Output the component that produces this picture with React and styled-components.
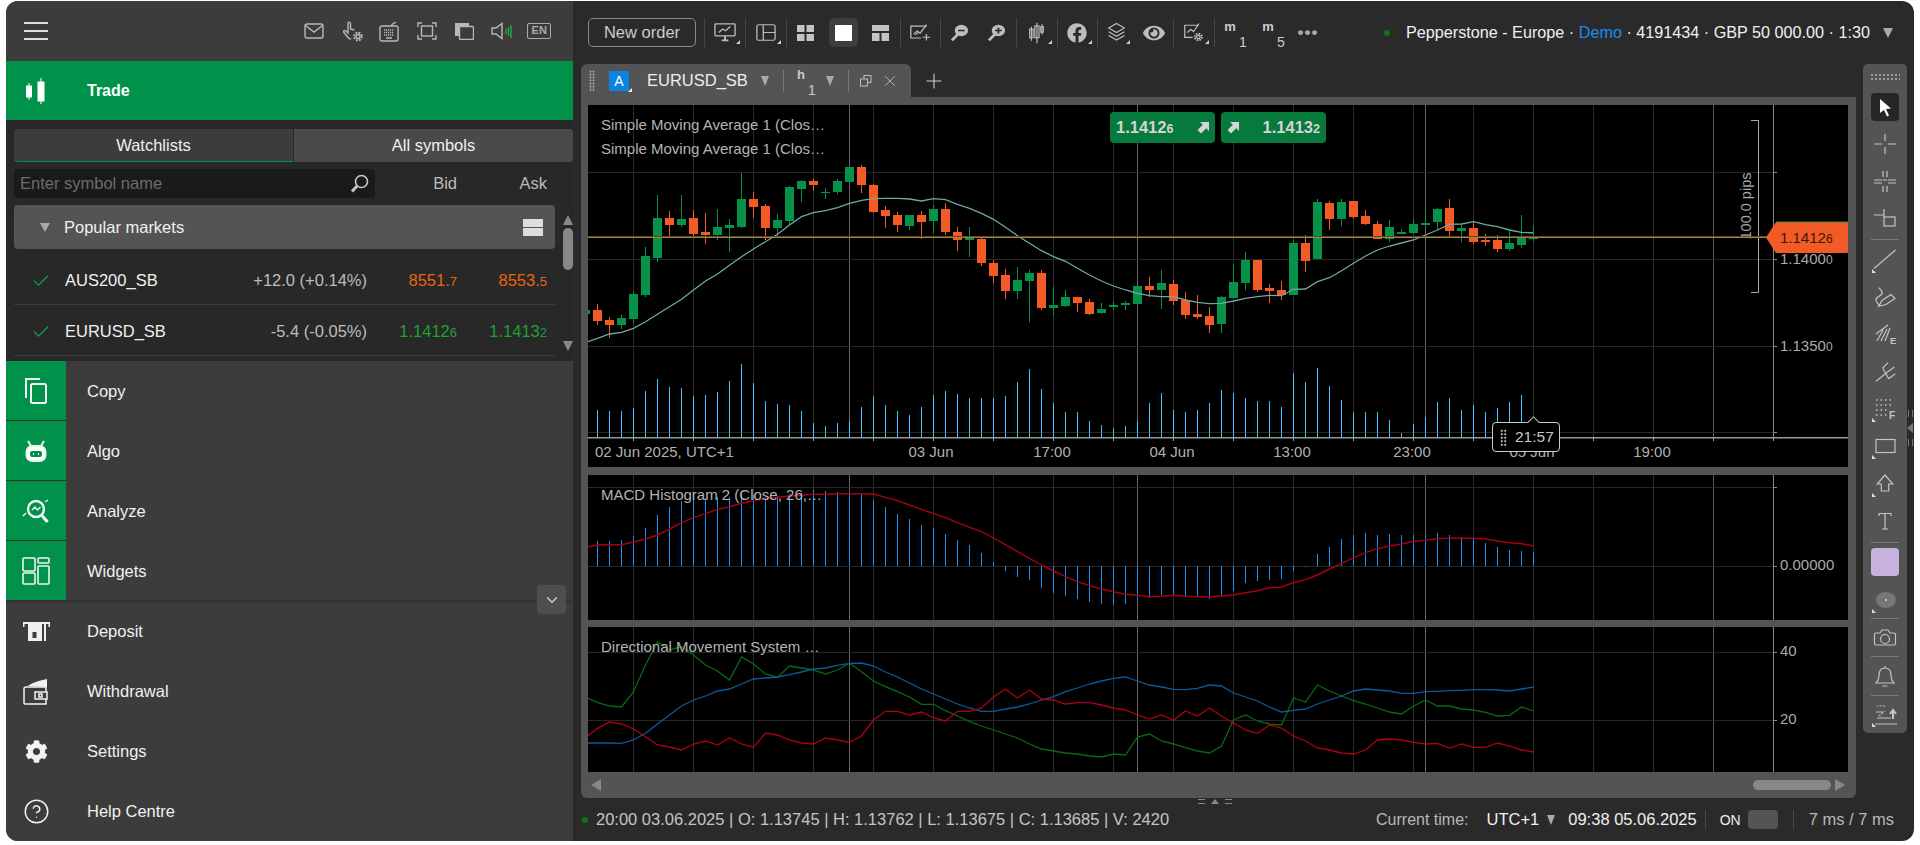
import React from 'react';
import styled, { createGlobalStyle } from 'styled-components';
import { Check, CircleHelp, ChevronDown, Plus, X } from 'lucide-react';
import { FaCog, FaEye, FaFacebook } from 'react-icons/fa';

const GREEN = '#00924a';
const FONT = '"Liberation Sans", Arial, sans-serif';

const Global = createGlobalStyle`
    html, body {
        margin: 0;
        background: #fff;
        overflow: hidden;
    }
    body {
        font-family: ${FONT};
        font-size: 16px;
        color: #ddd;
    }
    * { box-sizing: border-box; }
`;

const Shell = styled.div`
    display: flex;
    width: 1908px;
    height: 840px;
    margin: 1px 6px 4px;
    border-radius: 12px;
    overflow: hidden;
    background: #2a2a2a;
`;

/* ---------- left panel ---------- */
const Sidebar = styled.aside`
    display: flex;
    flex-direction: column;
    width: 567px;
    background: #3c3c3c;
    font-size: 16.5px;
    flex: none;
`;

const SideHeader = styled.header`
    display: flex;
    align-items: center;
    height: 60px;
    padding-left: 18px;
    flex: none;
`;

const HeaderIcons = styled.div`
    display: flex;
    align-items: center;
    margin-left: auto;
    margin-right: 15px;
    color: #b8b8b8;
`;

const HeaderSlot = styled.span`
    display: flex;
    align-items: center;
    justify-content: center;
    width: 37.5px;
`;

const LangBadge = styled.span`
    width: 24px;
    height: 16px;
    border: 1.5px solid #aaa;
    border-radius: 2px;
    font-size: 11px;
    font-weight: bold;
    line-height: 13px;
    text-align: center;
    color: #aaa;
`;

const TradeRow = styled.div`
    display: flex;
    align-items: center;
    height: 59px;
    background: ${GREEN};
    color: #fff;
    font-weight: bold;
    font-size: 16px;
    flex: none;
`;

const IconSlot = styled.div`
    display: flex;
    align-items: center;
    justify-content: center;
    width: 60px;
    height: 100%;
    margin-right: 21px;
    flex: none;
    color: #f2f2f2;
    background: ${p => (p.$green ? GREEN : 'transparent')};
    border-bottom: ${p => (p.$green ? '1px solid #2f2f2f' : 'none')};
`;

const WatchSection = styled.section`
    position: relative;
    height: 241px;
    padding: 9px 0 0 8px;
    background: #282828;
    flex: none;
`;

const Tabs = styled.div`
    display: flex;
    height: 33px;
    gap: 1px;
`;

const TabItem = styled.div`
    flex: 1;
    display: flex;
    align-items: center;
    justify-content: center;
    color: #f0f0f0;
    background: ${p => (p.$active ? '#3c3c3c' : '#4a4a4a')};
    border-bottom: ${p => (p.$active ? `1px solid ${GREEN}` : 'none')};
    border-radius: ${p => (p.$active ? '4px 0 0 4px' : '0 4px 4px 0')};
`;

const SearchRow = styled.div`
    display: grid;
    grid-template-columns: 361px 82px 90px;
    align-items: center;
    height: 29px;
    margin-top: 7px;
    color: #bbb;
`;

const SearchBox = styled.div`
    display: flex;
    align-items: center;
    justify-content: space-between;
    height: 29px;
    padding: 0 6px;
    background: #1a1a1a;
    border-radius: 4px;
    color: #6c6c6c;
    svg { color: #c8c8c8; }
`;

const RightCell = styled.span`
    text-align: right;
`;

const GroupHeader = styled.div`
    display: flex;
    align-items: center;
    width: 541px;
    height: 44px;
    margin: 7px 0 5px;
    padding-left: 26px;
    background: #545454;
    border-radius: 4px;
    color: #f0f0f0;
`;

const CaretDown = styled.span`
    width: 0;
    height: 0;
    margin-right: ${p => p.$mr || 0}px;
    margin-left: ${p => p.$ml || 0}px;
    border-left: ${p => p.$w || 5}px solid transparent;
    border-right: ${p => p.$w || 5}px solid transparent;
    border-top: ${p => p.$h || 9}px solid ${p => p.$color || '#aaa'};
    flex: none;
`;

const Stack = styled.span`
    display: flex;
    flex-direction: column;
    gap: 1px;
    width: 20px;
    margin-left: auto;
    margin-right: 12px;
    i {
        display: block;
        height: 8px;
        background: #ddd;
    }
`;

const WatchRow = styled.div`
    display: grid;
    grid-template-columns: 34px 1fr 120px 90px 90px;
    align-items: center;
    width: 541px;
    height: 51px;
    padding: 3px 8px 0 17px;
    border-bottom: 1px solid #3c3c3c;
    color: #f0f0f0;
`;

const Change = styled.span`
    text-align: right;
    color: #bdbdbd;
    white-space: nowrap;
`;

const Quote = styled.span`
    text-align: right;
    color: ${p => p.$color};
    small { font-size: 13px; }
`;

const ScrollRail = styled.div`
    position: absolute;
    right: 0;
    top: 95px;
    display: flex;
    flex-direction: column;
    align-items: center;
    width: 10px;
`;

const RailThumb = styled.div`
    width: 10px;
    height: 42px;
    margin-top: 3px;
    background: #888;
    border-radius: 5px;
`;

const ArrowUp = styled.span`
    width: 0;
    height: 0;
    margin-top: ${p => p.$mt || 0}px;
    border-left: 5px solid transparent;
    border-right: 5px solid transparent;
    border-bottom: 10px solid #888;
`;

const ArrowDown = styled(ArrowUp)`
    border-bottom: 0;
    border-top: 10px solid #888;
`;

const NavList = styled.nav`
    position: relative;
    display: flex;
    flex-direction: column;
    flex: 1;
`;

const NavRow = styled.div`
    display: flex;
    align-items: center;
    height: 60px;
    color: #f0f0f0;
    flex: none;
`;

const NavDivider = styled.div`
    height: 3px;
    margin: -1px 0 -2px;
    background: #333;
    flex: none;
`;

const CollapseBtn = styled.button`
    position: absolute;
    left: 531px;
    top: 224px;
    display: flex;
    align-items: center;
    justify-content: center;
    width: 29px;
    height: 29px;
    padding: 0;
    border: 0;
    border-radius: 4px;
    background: #4e4e4e;
    color: #ccc;
`;

/* ---------- main column ---------- */
const Main = styled.main`
    display: flex;
    flex-direction: column;
    flex: 1;
    min-width: 0;
`;

const Toolbar = styled.div`
    display: flex;
    align-items: center;
    height: 63px;
    padding: 0 21px 0 15px;
    color: #bdbdbd;
    flex: none;
`;

const NewOrder = styled.button`
    width: 108px;
    height: 29px;
    margin-right: 8px;
    padding: 0;
    border: 1px solid #8a8a8a;
    border-radius: 5px;
    background: transparent;
    color: #ccc;
    font: 16.5px ${FONT};
    flex: none;
`;

const Sep = styled.span`
    width: 1px;
    height: 29px;
    background: #454545;
    flex: none;
`;

const ToolBtn = styled.span`
    position: relative;
    display: flex;
    align-items: center;
    justify-content: center;
    width: ${p => p.$w || 37.5}px;
    height: 29px;
    flex: none;
    ${p => p.$caret && `
        &::after {
            content: '';
            position: absolute;
            right: 5px;
            bottom: 3px;
            border-left: 4px solid transparent;
            border-bottom: 4px solid #ccc;
        }
    `}
    ${p => p.$active && `
        &::before {
            content: '';
            position: absolute;
            left: 4px;
            right: 4px;
            top: 0;
            bottom: 0;
            background: #3d3d3d;
            border-radius: 5px;
        }
        svg { position: relative; }
    `}
`;

const Period = styled.span`
    display: inline-flex;
    gap: 3px;
    width: ${p => (p.$wide ? '22px' : 'auto')};
    height: 26px;
    margin-left: ${p => p.$ml || 0}px;
    font-size: 14px;
    color: #ccc;
    b {
        font-size: 13px;
        line-height: 14px;
        align-self: flex-start;
    }
    em {
        font-style: normal;
        line-height: 16px;
        align-self: flex-end;
        margin-bottom: -4px;
    }
`;

const Dots = styled.span`
    font-size: 17px;
    font-weight: bold;
    letter-spacing: 1px;
    color: #aaa;
    line-height: 10px;
`;

const Account = styled.div`
    display: flex;
    align-items: center;
    margin-left: auto;
    font-size: 16.2px;
    color: #f0f0f0;
    white-space: nowrap;
    em {
        font-style: normal;
        color: #1a8cf0;
    }
`;

const GreenDot = styled.span`
    width: 6px;
    height: 6px;
    margin-right: ${p => p.$mr}px;
    border-radius: 50%;
    background: #0b7a0b;
    flex: none;
`;

const Work = styled.div`
    position: relative;
    display: flex;
    padding-left: 8px;
    gap: 7px;
    flex: none;
`;

const ChartColumn = styled.div`
    display: flex;
    flex-direction: column;
    width: 1275px;
`;

const TabBar = styled.div`
    display: flex;
    align-items: center;
    height: 33px;
`;

const ChartTab = styled.div`
    display: flex;
    align-items: center;
    width: 330px;
    height: 33px;
    padding-left: 8px;
    background: #545454;
    border-radius: 6px 6px 0 0;
    color: #eee;
`;

const Grip = styled.span`
    width: 6px;
    height: 22px;
    margin-right: 14px;
    background-image: radial-gradient(circle, #888 1px, transparent 1.2px);
    background-size: 3px 3px;
    flex: none;
`;

const SymbolBadge = styled.span`
    position: relative;
    width: 20px;
    height: 20px;
    margin-right: 18px;
    background: #0a84e0;
    color: #fff;
    font-size: 14px;
    line-height: 20px;
    text-align: center;
    flex: none;
    &::after {
        content: '';
        position: absolute;
        right: -3px;
        bottom: -1px;
        border-left: 4px solid transparent;
        border-bottom: 4px solid #eee;
    }
`;

const SymbolName = styled.span`
    width: 100px;
    font-size: 16.5px;
    flex: none;
`;

const TabSep = styled.span`
    width: 1px;
    height: 22px;
    margin: 0 ${p => p.$r || 0}px 0 ${p => p.$l || 0}px;
    background: #777;
    flex: none;
`;

const RestoreIcon = styled.svg`
    width: 12px;
    height: 12px;
    fill: none;
    stroke: #bbb;
    flex: none;
`;

const CloseIcon = styled(X)`
    margin-left: 9px;
    color: #c4c4c4;
`;

const AddTab = styled.span`
    display: flex;
    margin-left: 11px;
    color: #d0d0d0;
`;

const Pane = styled.div`
    display: flex;
    flex-direction: column;
    height: 701px;
    padding: 8px 8px 0 7px;
    background: #545454;
    border-radius: 0 0 6px 6px;
`;

const ChartBox = styled.div`
    position: relative;
    height: ${p => p.$h}px;
    margin-bottom: ${p => p.$mb}px;
    background: #000;
    overflow: hidden;
    flex: none;
`;

const ChartSvg = styled.svg`
    display: block;
    font-family: ${FONT};
    font-size: 15px;
`;

const Legend = styled.div`
    position: absolute;
    left: 13px;
    top: ${p => p.$top}px;
    font-size: 15px;
    line-height: 24px;
    color: #b4b4b4;
    white-space: nowrap;
`;

const QuoteButtons = styled.div`
    position: absolute;
    left: 522px;
    top: 7px;
    display: flex;
    gap: 6px;
`;

const QuoteBtn = styled.div`
    display: flex;
    align-items: center;
    justify-content: space-between;
    flex-direction: ${p => (p.$reverse ? 'row-reverse' : 'row')};
    width: 105px;
    height: 31px;
    padding: 0 6px;
    background: #067a3c;
    border-radius: 4px;
    color: #d4d4d4;
    font-size: 16.5px;
    font-weight: bold;
    small { font-size: 12.5px; }
`;

const TimeTip = styled.div`
    position: absolute;
    left: 904px;
    top: 317px;
    display: flex;
    align-items: center;
    width: 68px;
    height: 30px;
    padding-left: 7px;
    gap: 8px;
    background: #000;
    border: 1px solid #ccc;
    border-radius: 4px;
    font-size: 15.5px;
    color: #c8c8c8;
    &::before {
        content: '';
        position: absolute;
        left: 36px;
        top: -5px;
        width: 8px;
        height: 8px;
        background: #000;
        border-left: 1px solid #ccc;
        border-top: 1px solid #ccc;
        transform: rotate(45deg);
    }
`;

const TipGrip = styled.span`
    width: 7px;
    height: 17px;
    background-image: radial-gradient(circle, #ccc 1.2px, transparent 1.4px);
    background-size: 3.5px 3.5px;
`;

const HScroll = styled.div`
    display: flex;
    align-items: center;
    height: 26px;
    padding: 0 3px;
`;

const ArrowSide = styled.span`
    width: 0;
    height: 0;
    border-top: 6px solid transparent;
    border-bottom: 6px solid transparent;
    ${p => (p.$right ? 'border-left: 10px solid #888;' : 'border-right: 10px solid #888;')}
    flex: none;
`;

const HThumb = styled.span`
    width: 78px;
    height: 10px;
    margin: 0 4px 0 auto;
    background: #888;
    border-radius: 5px;
`;

const Status = styled.footer`
    position: relative;
    display: flex;
    align-items: center;
    height: 43px;
    padding-left: 9px;
    font-size: 16.5px;
    color: #c4c4c4;
    white-space: nowrap;
    flex: none;
`;

const SplitHandle = styled.span`
    position: absolute;
    left: 625px;
    top: 1px;
    display: flex;
    align-items: center;
    gap: 6px;
    i {
        display: block;
        width: 7px;
        height: 5px;
        border-top: 1px solid #888;
        border-bottom: 1px solid #888;
    }
    u {
        display: block;
        border-left: 4px solid transparent;
        border-right: 4px solid transparent;
        border-bottom: 5px solid #888;
    }
`;

const StatusRight = styled.div`
    display: flex;
    align-items: center;
    margin-left: auto;
    margin-right: 20px;
`;

const Muted = styled.span`
    color: #b8b8b8;
    font-size: ${p => p.$fs || 16.5}px;
    margin-right: ${p => p.$mr || 0}px;
`;

const Bright = styled.span`
    color: #f0f0f0;
    margin-right: ${p => p.$mr || 0}px;
`;

const OnLabel = styled.span`
    font-size: 14px;
    color: #eee;
    margin: 0 7px 0 14px;
`;

const Toggle = styled.span`
    width: 30px;
    height: 19px;
    margin-right: 15px;
    background: #545454;
    border-radius: 4px;
`;

const StatusSep = styled.span`
    width: 1px;
    height: 19px;
    background: #4a4a4a;
    margin-right: ${p => p.$mr || 0}px;
    margin-left: ${p => p.$ml || 0}px;
`;

/* ---------- drawing tools ---------- */
const Tools = styled.div`
    display: flex;
    flex-direction: column;
    align-items: center;
    width: 44px;
    height: 669px;
    background: #545454;
    border-radius: 5px;
    color: #c4c4c4;
    flex: none;
`;

const ToolsGrip = styled.span`
    width: 30px;
    height: 8px;
    margin: 9px 0 7px;
    background-image: radial-gradient(circle, #a0a0a0 1.1px, transparent 1.3px);
    background-size: 4px 4px;
    flex: none;
`;

const ToolItem = styled.span`
    display: flex;
    align-items: center;
    justify-content: center;
    width: 28px;
    height: 37.3px;
    flex: none;
    ${p => p.$active && `
        position: relative;
        &::before {
            content: '';
            position: absolute;
            left: 0;
            right: 0;
            top: 5px;
            bottom: 4px;
            background: #262626;
            border-radius: 4px;
        }
        svg { position: relative; }
    `}
`;

const Swatch = styled.span`
    width: 28px;
    height: 28px;
    background: #c8b3df;
    border-radius: 4px;
`;

const ToolSep = styled.span`
    width: 28px;
    height: 1px;
    margin: ${p => (p.$loose ? '2px 0 1px' : '0')};
    background: #7a7a7a;
    flex: none;
`;

const EdgeHandle = styled.span`
    position: absolute;
    right: 1px;
    top: 346px;
    display: flex;
    flex-direction: column;
    align-items: center;
    gap: 6px;
    i {
        display: block;
        width: 5px;
        height: 7px;
        border-left: 1px solid #777;
        border-right: 1px solid #777;
    }
    u {
        display: block;
        border-top: 5px solid transparent;
        border-bottom: 5px solid transparent;
        border-right: 6px solid #777;
    }
`;

/* ---------- icons ---------- */
const Ico = ({ s = 24, h, rw, rh, children, sw = 1.4 }) => (
    <svg width={rw || s} height={rh || h || s} viewBox={`0 0 ${s} ${h || s}`} preserveAspectRatio="none" fill="none" stroke="currentColor" strokeWidth={sw}>
        {children}
    </svg>
);

const Hamburger = () => (
    <Ico s={24} h={20} sw={2}><path d="M0 2h24M0 10h24M0 18h24" /></Ico>
);
const Mail = () => (
    <Ico s={20} h={16}><rect x="1" y="1" width="18" height="14" rx="2" /><path d="M1.500 2.500 10 9l8.500-6.500" /></Ico>
);
const HandGear = () => (
    <Ico s={22} h={23}>
        <path d="M7 2.500c1-.9 2.500 0 2.500 1V9l4 1.200" />
        <path d="M7 2.500V13L4.600 10.800c-1.200-1-2.600.4-1.800 1.500L7 17.500c1 1.200 2 1.500 3 1.500" />
        <circle cx="17" cy="16.500" r="2" />
        <circle cx="17" cy="16.500" r="3.800" strokeDasharray="1.800 1.200" strokeWidth="2" />
    </Ico>
);
const Keyboard = () => (
    <Ico s={20} h={21}>
        <rect x="1" y="5" width="18" height="15" rx="2" />
        <path d="M5 9h10M5 11.500h10M5 14h10" strokeDasharray="1.200 .8" />
        <path d="M7 17h6M13 5V3.500L17 1" />
    </Ico>
);
const FrameIcon = () => (
    <Ico s={20} h={18}>
        <rect x="4.500" y="4" width="11" height="10" />
        <path d="M1 5V1h4M15 1h4v4M19 13v4h-4M5 17H1v-4" />
    </Ico>
);
const Windows = () => (
    <Ico s={20} h={18}>
        <path d="M1 14V1h14v3H5v10z" fill="currentColor" stroke="none" />
        <rect x="5.500" y="4.500" width="14" height="13" rx="1" />
    </Ico>
);
const Speaker = () => (
    <Ico s={22} h={18}>
        <path d="M1 6h4l6-4.500v15L5 12H1z" />
        <path d="M15 7v5M17.500 5v9M20 3v13" stroke="#2da24a" />
    </Ico>
);
const TradeIcon = () => (
    <svg width="22" height="28" viewBox="0 0 22 28" fill="#fff" stroke="#fff">
        <rect x="1.500" y="9" width="5" height="11" />
        <path d="M4 6v17" />
        <rect x="13" y="5" width="6" height="19" />
        <path d="M16 1v26" />
    </svg>
);
const CopyIcon = () => (
    <Ico s={22} h={26} sw={2}>
        <path d="M1 20V1h14" /><rect x="6" y="6" width="15" height="19" rx="1.500" />
    </Ico>
);
const AlgoIcon = () => (
    <Ico s={22} h={22} sw={2}>
        <path d="M3 1l3 5M19 1l-3 5" />
        <rect x="1.500" y="6" width="19" height="15" rx="6" fill="#fff" />
        <rect x="5" y="11" width="12" height="6" rx="2" fill={GREEN} stroke="none" />
        <path d="M8 14h1M13 14h1" stroke="#fff" />
    </Ico>
);
const AnalyzeIcon = () => (
    <Ico s={28} h={26} sw={2.400}>
        <circle cx="14" cy="11" r="8" />
        <path d="M19.500 17l6 7" strokeWidth="3.200" />
        <path d="M10 12l3-3 2.500 3 3-3" strokeWidth="1.400" />
        <path d="M1 18l3-3M23 4l3-2" strokeWidth="1.400" />
    </Ico>
);
const WidgetsIcon = () => (
    <Ico s={28} h={28} sw={1.600}>
        <rect x="1" y="1" width="12" height="13" rx="1" />
        <rect x="1" y="16" width="12" height="11" rx="1" />
        <rect x="16" y="1" width="11" height="5" rx="1" />
        <rect x="16" y="9" width="11" height="18" rx="1" />
    </Ico>
);
const DepositIcon = () => (
    <svg width="29" height="21" viewBox="0 0 29 21" fill="#f0f0f0">
        <path d="M1 1h27v5h-1.500V3h-24v3H1z" />
        <path d="M6 3h14v17H6z" />
        <rect x="22" y="3" width="2" height="17" />
        <rect x="10.500" y="11" width="4" height="6" fill="#3c3c3c" />
    </svg>
);
const WithdrawIcon = () => (
    <Ico s={26} h={27} sw={1.500}>
        <path d="M1 11v14a1 1 0 0 0 1 1h21v-5M1 11a2 2 0 0 1 2-2h20v5" />
        <rect x="12" y="14" width="12" height="7" />
        <rect x="16" y="16" width="3" height="3" />
        <path d="M5 8c3-3 10-5 19-7v8" fill="#f0f0f0" stroke="none" />
    </Ico>
);
const SearchIcon = () => (
    <Ico s={19} h={20} sw={1.600}>
        <circle cx="11.500" cy="7.500" r="6" />
        <path d="M7 12l-5 5.500" strokeWidth="3" />
    </Ico>
);

const MonitorIcon = () => (
    <Ico s={24} h={22} rw={23} rh={19}>
        <rect x="1" y="1" width="21" height="14" rx="1" />
        <path d="M5 11l4-4 3 2 5-5" /><path d="M8 20h7M11.500 15v5" strokeWidth="2" />
    </Ico>
);
const PanelsIcon = () => (
    <Ico s={22} h={22} rw={20} rh={17}>
        <rect x="1" y="1" width="20" height="20" rx="2" /><path d="M8 1v20M8 11h13" />
    </Ico>
);
const Grid4 = () => (
    <svg width="17" height="16" fill="#c4c4c4"><rect width="7.500" height="7" /><rect x="9.500" width="7.500" height="7" /><rect y="9" width="7.500" height="7" /><rect x="9.500" y="9" width="7.500" height="7" /></svg>
);
const Single = () => (
    <svg width="17" height="16" fill="#fff"><rect width="17" height="16" /></svg>
);
const Grid3 = () => (
    <svg width="17" height="16" fill="#c4c4c4"><rect width="17" height="6" /><rect y="8" width="7.500" height="8" /><rect x="9.500" y="8" width="7.500" height="8" /></svg>
);
const AddChart = () => (
    <Ico s={24} h={24} rw={22} rh={19}>
        <path d="M19 4H2v15h11" /><path d="M5 14l4-4 3 3 6-9 1-2M7 15l4-4" /><path d="M19 14v8M15 18h8" />
    </Ico>
);
const Zoom = ({ plus }) => (
    <Ico s={20} h={22} rw={19} rh={18} sw={2.400}>
        <circle cx="12" cy="8" r="7" fill="currentColor" stroke="none" />
        <path d="M8.500 8h7" stroke="#2a2a2a" strokeWidth="2" />
        {plus && <path d="M12 4.500v7" stroke="#2a2a2a" strokeWidth="2" />}
        <path d="M8 13l-6 7" strokeWidth="3" />
    </Ico>
);
const CandlesIcon = () => (
    <Ico s={20} h={28} rw={17} rh={22}>
        <rect x="2" y="9" width="4" height="11" /><path d="M4 6v18" />
        <rect x="8" y="5" width="5" height="15" /><path d="M10.500 1v26" />
        <rect x="15" y="6" width="3" height="7" /><path d="M16.500 3v13" />
    </Ico>
);
const LayersIcon = () => (
    <Ico s={24} h={28} rw={21} rh={21}>
        <path d="M12 2l9 6-9 6-9-6z" />
        <path d="M3 13l9 6 9-6M3 18l9 6 9-6" />
    </Ico>
);
const ChartGear = () => (
    <Ico s={24} h={26} rw={21} rh={21}>
        <path d="M18 4H2v15h9" /><path d="M5 13l4-4 3 3 5-8 1-2" />
        <circle cx="17.500" cy="18.500" r="2" /><circle cx="17.500" cy="18.500" r="4" strokeDasharray="1.800 1.300" strokeWidth="2.400" />
    </Ico>
);

const TC = () => <path d="M1 27v-4l4 4z" fill="#ddd" stroke="none" />;
const Tool = ({ children }) => (
    <svg width="28" height="28" viewBox="0 0 28 28" fill="none" stroke="currentColor" strokeWidth="1.200">{children}</svg>
);
const ToolIcons = {
    cursor: <Tool><path d="M9 6l11 9.500-5 .5 3 6.500-2 1-3-6.500-4 3z" fill="#fff" stroke="none" /></Tool>,
    cross: <Tool><path d="M3 14h8M17 14h8M14 4v7M14 17v7" /></Tool>,
    hair: <Tool><path d="M3 13h8M17 13h8M3 16h8M17 16h8M12 4v6M12 19v6M16 4v6M16 19v6" /><path d="M12 13h4" /></Tool>,
    ruler: <Tool><path d="M3 10h10M13 4v8" /><rect x="13" y="12" width="11" height="9" /></Tool>,
    line: <Tool><TC /><path d="M3 22.500L24.500 4" /></Tool>,
    pen: <Tool><path d="M7.700 4.700C10 7 12 8 11 10.700S4 14 5 17.300s3 4 2.700 5" /><path d="M7.700 23.300L11 17.500l9-6 4 4-9 6z" /></Tool>,
    fib: <Tool><path d="M5 14L17 5M6 21L12 10M10 21l6-12M14 21l5-13" /><text x="19" y="24" fontSize="9.500" fill="currentColor" stroke="none" fontWeight="bold">E</text></Tool>,
    fork: <Tool><path d="M5 23.300l9.300-7.600M11.700 10l6 10.700M11.700 10L17 4.700M14.300 15.700l9-6.700M17.700 20.700l6.600-5" /></Tool>,
    fibdots: <Tool><TC /><path d="M5 5h18M5 10h18M5 15h12M5 20h12" strokeDasharray="1.500 3" strokeWidth="1.500" /><text x="18" y="24" fontSize="10" fill="currentColor" stroke="none" fontWeight="bold">F</text></Tool>,
    rect: <Tool><TC /><rect x="5" y="7.500" width="19" height="13" /></Tool>,
    arrow: <Tool><TC /><path d="M14 5l-7.700 9h4v7h7.400v-7h4z" /></Tool>,
    text: <Tool><path d="M8 9V6.500h12V9M14 6.500V22M11 22h6" /></Tool>,
    ellipse: <Tool><TC /><ellipse cx="15" cy="14" rx="10" ry="8" fill="#777" stroke="none" /><circle cx="15" cy="14" r="1" fill="#ddd" stroke="none" /></Tool>,
    camera: <Tool><path d="M9 9l2-3h6l2 3h4c1 0 1.500.5 1.500 1.500v9c0 1-.5 1.500-1.500 1.500H5c-1 0-1.500-.5-1.500-1.500v-9C3.500 9.500 4 9 5 9z" /><circle cx="14" cy="15" r="4.500" /></Tool>,
    bell: <Tool><path d="M5 21c2-2 3-4 3-8s2-7 6-7 6 3 6 7 1 6 3 8zM11.500 24h5M14 4v2" /></Tool>,
    order: <Tool><TC /><path d="M4 24h22M6 18h14M5 12h7" /><path d="M8 16l6-5M14 6h-8" strokeDasharray="2 1.500" /><path d="M22 19v-8M19 14l3-4 3 4" strokeWidth="2" /></Tool>,
};

const MiniUp = () => (
    <svg width="12" height="12" viewBox="0 0 12 12" fill="#d4d4d4">
        <path d="M3 0h9v9l-2.800-2.800-5.200 5.200L.6 8l5.200-5.200z" />
    </svg>
);

/* ---------- data: body top, body bottom, wick top, wick bottom, colour (zoom units) ---------- */
const G = 'g';
const O = 'o';
const CANDLES = [
    [630, 642, 630, 642, G], [631, 663, 612, 676, O], [660, 676, 652, 715, O], [655, 675, 646, 688, G], [582, 657, 577, 668, G],
    [468, 585, 441, 591, G], [354, 474, 285, 486, G], [354, 375, 333, 409, O], [357, 375, 285, 380, G], [354, 402, 330, 409, O],
    [396, 405, 339, 433, O], [381, 405, 327, 420, G], [375, 384, 357, 457, G], [297, 381, 219, 384, G], [297, 321, 276, 354, O],
    [318, 384, 312, 420, O], [360, 384, 342, 408, G], [261, 363, 258, 375, G], [243, 267, 240, 306, G], [243, 255, 237, 273, O],
    [276, 279, 264, 297, G], [243, 276, 237, 282, G], [201, 246, 201, 250, G], [201, 255, 195, 279, O], [255, 336, 252, 339, O],
    [330, 348, 318, 384, O], [346, 375, 336, 396, O], [346, 378, 346, 390, G], [346, 366, 333, 417, O], [327, 363, 315, 400, G],
    [327, 396, 309, 405, O], [396, 420, 381, 453, O], [414, 420, 381, 471, G], [417, 489, 414, 498, O], [489, 528, 480, 549, O],
    [525, 573, 507, 597, O], [540, 573, 501, 597, G], [519, 543, 510, 666, G], [519, 624, 510, 630, O], [615, 624, 561, 648, G],
    [591, 618, 570, 621, G], [591, 609, 591, 636, O], [606, 642, 597, 645, O], [627, 639, 609, 642, G], [615, 621, 603, 630, G],
    [609, 615, 603, 630, G], [558, 612, 555, 612, G], [558, 570, 531, 591, O], [549, 570, 510, 627, G], [552, 603, 540, 615, O],
    [600, 645, 576, 657, O], [642, 651, 585, 657, O], [648, 675, 621, 699, O], [591, 672, 588, 699, G], [546, 594, 492, 597, G],
    [480, 549, 456, 570, G], [480, 570, 480, 576, O], [564, 573, 552, 609, O], [570, 585, 543, 600, O], [429, 585, 420, 585, G],
    [429, 483, 405, 516, O], [306, 477, 297, 477, G], [309, 357, 303, 390, O], [306, 357, 297, 378, G], [303, 351, 303, 357, O],
    [348, 372, 330, 375, O], [372, 417, 363, 417, O], [381, 417, 360, 426, G], [396, 402, 387, 402, G], [372, 399, 357, 402, G],
    [369, 375, 336, 378, G], [327, 366, 324, 390, G], [324, 393, 297, 408, O], [384, 393, 372, 426, G], [384, 426, 363, 432, O],
    [420, 426, 402, 438, O], [420, 447, 405, 456, O], [429, 447, 390, 453, G], [414, 435, 345, 444, G], [414, 418, 375, 423, G],
];
const SMA = [725, 715, 702, 697, 685, 665, 643, 620, 598, 570, 543, 522, 496, 470, 447, 425, 403, 375, 350, 338, 332, 323, 310, 301, 296, 295, 295, 297, 303, 296, 299, 313, 325, 340, 358, 382, 407, 430, 452, 470, 484, 505, 525, 543, 558, 570, 580, 587, 590, 590, 600, 607, 611, 610, 603, 595, 590, 586, 587, 568, 567, 545, 533, 512, 490, 468, 450, 438, 429, 420, 405, 390, 373, 372, 365, 374, 380, 390, 397, 399];
const VOLUME = [930, 933, 933, 924, 873, 837, 861, 864, 888, 885, 876, 843, 792, 849, 903, 912, 915, 933, 969, 978, 969, 963, 921, 888, 915, 933, 945, 921, 885, 873, 882, 894, 894, 894, 888, 846, 807, 867, 909, 936, 936, 963, 975, 984, 978, 963, 909, 879, 930, 936, 930, 909, 870, 879, 894, 903, 903, 921, 818, 846, 804, 858, 900, 936, 936, 936, 960, 999, 972, 951, 906, 894, 930, 915, 936, 924, 906, 885, 960];
const MACD_BARS = [213, 213, 210, 198, 175, 135, 111, 92, 88, 85, 80, 80, 72, 75, 78, 78, 72, 68, 60, 62, 65, 68, 72, 90, 111, 132, 147, 165, 175, 192, 210, 225, 249, 276, 303, 321, 330, 354, 369, 378, 387, 396, 402, 405, 402, 390, 384, 375, 375, 378, 380, 387, 378, 363, 339, 333, 330, 327, 303, 292, 252, 231, 207, 195, 189, 195, 192, 195, 195, 195, 189, 195, 201, 207, 219, 231, 240, 243, 246];
const MACD_LINE = [230, 225, 224, 224, 216, 207, 195, 177, 158, 143, 131, 118, 110, 100, 92, 85, 82, 78, 76, 73, 73, 71, 71, 71, 72, 82, 92, 105, 118, 130, 143, 158, 172, 185, 204, 224, 245, 265, 285, 303, 320, 335, 347, 357, 365, 373, 376, 380, 379, 376, 379, 380, 380, 378, 375, 368, 362, 353, 351, 338, 329, 315, 297, 280, 263, 248, 236, 228, 222, 214, 211, 206, 205, 205, 205, 207, 213, 218, 221, 228];
const DMS_GREEN = [685, 697, 708, 711, 665, 585, 516, 540, 530, 555, 585, 603, 630, 561, 582, 612, 622, 588, 594, 600, 612, 600, 580, 605, 633, 650, 665, 681, 703, 703, 722, 738, 754, 768, 780, 792, 804, 822, 837, 843, 849, 852, 858, 861, 852, 855, 801, 792, 813, 822, 833, 843, 849, 828, 750, 735, 753, 762, 765, 684, 696, 645, 663, 678, 692, 702, 714, 726, 732, 708, 690, 708, 708, 717, 720, 727, 738, 736, 711, 723];
const DMS_BLUE = [819, 819, 819, 820, 810, 790, 762, 735, 708, 690, 678, 663, 657, 642, 627, 624, 621, 614, 606, 597, 594, 586, 580, 579, 588, 606, 621, 639, 657, 672, 687, 702, 714, 724, 724, 717, 711, 702, 690, 680, 665, 654, 642, 633, 625, 621, 633, 645, 651, 658, 659, 655, 645, 648, 669, 681, 693, 711, 726, 721, 717, 702, 690, 678, 663, 657, 660, 663, 670, 670, 665, 664, 662, 661, 659, 659, 660, 663, 657, 651];
const DMS_RED = [797, 775, 756, 762, 777, 800, 825, 831, 840, 822, 813, 825, 804, 822, 832, 789, 795, 810, 819, 822, 804, 810, 817, 798, 750, 724, 724, 735, 726, 744, 753, 724, 724, 714, 681, 657, 684, 660, 687, 690, 702, 698, 698, 705, 714, 720, 735, 747, 735, 751, 723, 738, 714, 738, 759, 780, 790, 765, 774, 798, 813, 834, 840, 849, 852, 840, 810, 807, 810, 817, 822, 820, 834, 822, 832, 832, 819, 828, 840, 846];

const xk = k => 9.5 + 12 * k;
const points = (values, offset) =>
    values.map((v, i) => `${i === 0 ? 0 : xk(i - 1)},${(v / 3 - offset).toFixed(1)}`).join(' ');

const V_LINES = Array.from({ length: 20 }, (_, i) => 45.5 + 60 * i);

function Grid({ height, rows }) {
    return (
        <g shapeRendering="crispEdges">
            {V_LINES.map(x => (
                <line key={x} x1={x} x2={x} y1="0" y2={height} stroke={x === 1185.5 ? '#8a8a8a' : x === 1125.5 ? '#555' : '#2c2c2c'} />
            ))}
            {[261.5, 549.5, 837.5].map(x => (
                <line key={x} x1={x} x2={x} y1="0" y2={height} stroke="#666" />
            ))}
            {rows.map(y => (
                <g key={y}>
                    <line x1="0" x2="1185" y1={y} y2={y} stroke="#262626" />
                    <line x1="1185" x2="1189" y1={y} y2={y} stroke="#888" />
                </g>
            ))}
        </g>
    );
}

const AxisPrice = ({ y, main, tail, fill = '#aaa' }) => (
    <text x="1192" y={y + 5} fill={fill}>{main}<tspan fontSize="12">{tail}</tspan></text>
);

const TimeLabel = ({ x, anchor = 'middle', children }) => (
    <text x={x} y="352" fill="#b0b0b0" textAnchor={anchor}>{children}</text>
);

function PriceChart() {
    return (
        <ChartSvg width="1260" height="362">
            <Grid height={333} rows={[67, 154, 241, 327]} />
            {VOLUME.map((v, k) => (
                <rect key={k} x={xk(k) - 0.5} y={v / 3 - 5} width="1" height={332 - (v / 3 - 5)} fill="#45bfff" shapeRendering="crispEdges" />
            ))}
            <rect x="0" y="332" width="1260" height="1.500" fill="#999" />
            {V_LINES.map(x => <line key={x} x1={x} x2={x} y1="333" y2="336" stroke="#999" />)}
            <g shapeRendering="crispEdges">
                {CANDLES.map(([top, bot, wt, wb, c], i) => {
                    const color = c === G ? '#07924a' : '#f25a26';
                    const x = xk(i - 1);
                    return (
                        <g key={i} fill={color}>
                            <rect x={x - 0.5} y={wt / 3 - 5} width="1" height={(wb - wt) / 3} />
                            <rect x={x - 4.5} y={top / 3 - 5} width="9" height={(bot - top) / 3} />
                        </g>
                    );
                })}
            </g>
            <polyline points={points(SMA, 5)} fill="none" stroke="#6fa8a4" strokeWidth="1.300" />
            <text transform="translate(1163 101) rotate(-90)" textAnchor="middle" fill="#a8a8a8" fontSize="14.500">100.0 pips</text>
            <path d="M1163 15.500h7.500v172h-7.500" fill="none" stroke="#aaa" />
            <rect x="0" y="131" width="1180" height="1" fill="#0f6e30" />
            <rect x="0" y="132" width="1180" height="1" fill="#f0602a" />
            <AxisPrice y={153.500} main="1.1400" tail="0" />
            <AxisPrice y={240.500} main="1.1350" tail="0" />
            <path d="M1178 132.500L1188 117h71q1 0 1 1v29q0 1-1 1h-71z" fill="#f25a26" />
            <path d="M1188 117h72" stroke="#2f8f3d" />
            <AxisPrice y={132.500} main="1.1412" tail="6" fill="#3a1a0c" />
            <TimeLabel x={7} anchor="start">02 Jun 2025, UTC+1</TimeLabel>
            <TimeLabel x={343}>03 Jun</TimeLabel>
            <TimeLabel x={464}>17:00</TimeLabel>
            <TimeLabel x={584}>04 Jun</TimeLabel>
            <TimeLabel x={704}>13:00</TimeLabel>
            <TimeLabel x={824}>23:00</TimeLabel>
            <TimeLabel x={944}>05 Jun</TimeLabel>
            <TimeLabel x={1064}>19:00</TimeLabel>
        </ChartSvg>
    );
}

function MacdChart() {
    const zero = 287 / 3 - 5;
    return (
        <ChartSvg width="1260" height="145">
            <Grid height={145} rows={[12, 91]} />
            {MACD_BARS.map((v, k) => {
                const y = v / 3 - 5;
                return (
                    <rect key={k} x={xk(k) - 0.5} y={Math.min(y, zero)} width="1" height={Math.abs(y - zero)} fill="#1a90f0" shapeRendering="crispEdges" />
                );
            })}
            <polyline points={points(MACD_LINE, 5)} fill="none" stroke="#a80012" strokeWidth="1.400" />
            <text x="1192" y="95" fill="#aaa">0.00000</text>
        </ChartSvg>
    );
}

function DmsChart() {
    return (
        <ChartSvg width="1260" height="145">
            <Grid height={145} rows={[25, 93]} />
            <polyline points={points(DMS_GREEN, 157)} fill="none" stroke="#0a6a12" strokeWidth="1.300" />
            <polyline points={points(DMS_BLUE, 157)} fill="none" stroke="#0c5a9a" strokeWidth="1.300" />
            <polyline points={points(DMS_RED, 157)} fill="none" stroke="#b00012" strokeWidth="1.300" />
            <text x="1192" y="29" fill="#aaa">40</text>
            <text x="1192" y="97" fill="#aaa">20</text>
        </ChartSvg>
    );
}

const toolbarItems = [
    { w: 40, caret: true, icon: <MonitorIcon /> },
    'sep',
    { w: 40, caret: true, icon: <PanelsIcon /> },
    'sep',
    { icon: <Grid4 /> },
    { active: true, icon: <Single /> },
    { icon: <Grid3 /> },
    'sep',
    { w: 39, icon: <AddChart /> },
    'sep',
    { icon: <Zoom /> },
    { icon: <Zoom plus /> },
    'sep',
    { w: 40, caret: true, icon: <CandlesIcon /> },
    'sep',
    { w: 39, caret: true, icon: <FaFacebook size={20} /> },
    'sep',
    { caret: true, icon: <LayersIcon /> },
    { icon: <FaEye size={22} /> },
    'sep',
    { w: 40, caret: true, icon: <ChartGear /> },
    'sep',
];

const headerIcons = [<Mail />, <HandGear />, <Keyboard />, <FrameIcon />, <Windows />, <Speaker />, <LangBadge>EN</LangBadge>];

const navTop = [
    ['Copy', <CopyIcon />],
    ['Algo', <AlgoIcon />],
    ['Analyze', <AnalyzeIcon />],
    ['Widgets', <WidgetsIcon />],
];
const navBottom = [
    ['Deposit', <DepositIcon />],
    ['Withdrawal', <WithdrawIcon />],
    ['Settings', <FaCog size={23} />],
    ['Help Centre', <CircleHelp size={27} strokeWidth={1.300} />],
];

const toolRows = [
    ['cursor', 'cross', 'hair', 'ruler'],
    ['line', 'pen', 'fib', 'fork', 'fibdots', 'rect', 'arrow', 'text'],
    ['swatch', 'ellipse'],
    ['camera'],
    ['bell'],
    ['order'],
];

export default function App() {
    return (
        <>
            <Global />
            <Shell>
                <Sidebar>
                    <SideHeader>
                        <Hamburger />
                        <HeaderIcons>
                            {headerIcons.map((icon, i) => <HeaderSlot key={i}>{icon}</HeaderSlot>)}
                        </HeaderIcons>
                    </SideHeader>
                    <TradeRow>
                        <IconSlot><TradeIcon /></IconSlot>
                        Trade
                    </TradeRow>
                    <WatchSection>
                        <Tabs>
                            <TabItem $active>Watchlists</TabItem>
                            <TabItem>All symbols</TabItem>
                        </Tabs>
                        <SearchRow>
                            <SearchBox>Enter symbol name<SearchIcon /></SearchBox>
                            <RightCell>Bid</RightCell>
                            <RightCell>Ask</RightCell>
                        </SearchRow>
                        <GroupHeader>
                            <CaretDown $mr={14} />
                            Popular markets
                            <Stack><i /><i /></Stack>
                        </GroupHeader>
                        <WatchRow>
                            <Check size={20} strokeWidth={1.500} color="#10a050" />
                            <span>AUS200_SB</span>
                            <Change>+12.0 (+0.14%)</Change>
                            <Quote $color="#e8650f">8551.<small>7</small></Quote>
                            <Quote $color="#e8650f">8553.<small>5</small></Quote>
                        </WatchRow>
                        <WatchRow>
                            <Check size={20} strokeWidth={1.500} color="#10a050" />
                            <span>EURUSD_SB</span>
                            <Change>-5.4 (-0.05%)</Change>
                            <Quote $color="#22a033">1.1412<small>6</small></Quote>
                            <Quote $color="#22a033">1.1413<small>2</small></Quote>
                        </WatchRow>
                        <ScrollRail>
                            <ArrowUp />
                            <RailThumb />
                            <ArrowDown $mt={71} />
                        </ScrollRail>
                    </WatchSection>
                    <NavList>
                        {navTop.map(([label, icon]) => (
                            <NavRow key={label}>
                                <IconSlot $green>{icon}</IconSlot>
                                {label}
                            </NavRow>
                        ))}
                        <NavDivider />
                        {navBottom.map(([label, icon]) => (
                            <NavRow key={label}>
                                <IconSlot>{icon}</IconSlot>
                                {label}
                            </NavRow>
                        ))}
                        <CollapseBtn><ChevronDown size={18} /></CollapseBtn>
                    </NavList>
                </Sidebar>
                <Main>
                    <Toolbar>
                        <NewOrder>New order</NewOrder>
                        <Sep />
                        {toolbarItems.map((item, i) =>
                            item === 'sep' ? <Sep key={i} /> : (
                                <ToolBtn key={i} $w={item.w} $caret={item.caret} $active={item.active}>{item.icon}</ToolBtn>
                            )
                        )}
                        <ToolBtn $w={38}><Period $ml={4}><b>m</b><em>1</em></Period></ToolBtn>
                        <ToolBtn $w={38}><Period $ml={4}><b>m</b><em>5</em></Period></ToolBtn>
                        <ToolBtn $w={35}><Dots>•••</Dots></ToolBtn>
                        <Account>
                            <GreenDot $mr={16} />
                            Pepperstone - Europe ·&nbsp;<em>Demo</em>&nbsp;· 4191434 · GBP 50 000.00 · 1:30
                            <CaretDown $ml={13} $w={5.500} $h={10} />
                        </Account>
                    </Toolbar>
                    <Work>
                        <ChartColumn>
                            <TabBar>
                                <ChartTab>
                                    <Grip />
                                    <SymbolBadge>A</SymbolBadge>
                                    <SymbolName>EURUSD_SB</SymbolName>
                                    <CaretDown $ml={14} $w={4.500} $h={10} />
                                    <TabSep $l={14} $r={13} />
                                    <Period $wide><b>h</b><em>1</em></Period>
                                    <CaretDown $ml={7} $w={4.500} $h={10} />
                                    <TabSep $l={14} $r={11} />
                                    <RestoreIcon viewBox="0 0 12 12"><rect x="4" y=".5" width="7" height="7" /><rect x=".5" y="4" width="7" height="7" fill="#545454" /></RestoreIcon>
                                    <CloseIcon size={18} strokeWidth={1.100} />
                                </ChartTab>
                                <AddTab><Plus size={24} strokeWidth={1.100} /></AddTab>
                            </TabBar>
                            <Pane>
                                <ChartBox $h={362} $mb={8}>
                                    <PriceChart />
                                    <Legend $top={8}>
                                        Simple Moving Average 1 (Clos…<br />
                                        Simple Moving Average 1 (Clos…
                                    </Legend>
                                    <QuoteButtons>
                                        <QuoteBtn><span>1.1412<small>6</small></span><MiniUp /></QuoteBtn>
                                        <QuoteBtn $reverse><span>1.1413<small>2</small></span><MiniUp /></QuoteBtn>
                                    </QuoteButtons>
                                    <TimeTip><TipGrip />21:57</TimeTip>
                                </ChartBox>
                                <ChartBox $h={145} $mb={7}>
                                    <MacdChart />
                                    <Legend $top={8}>MACD Histogram 2 (Close, 26,…</Legend>
                                </ChartBox>
                                <ChartBox $h={145} $mb={0}>
                                    <DmsChart />
                                    <Legend $top={8}>Directional Movement System …</Legend>
                                </ChartBox>
                                <HScroll>
                                    <ArrowSide />
                                    <HThumb />
                                    <ArrowSide $right />
                                </HScroll>
                            </Pane>
                        </ChartColumn>
                        <Tools>
                            <ToolsGrip />
                            {toolRows.map((row, r) => (
                                <React.Fragment key={r}>
                                    {r > 0 && <ToolSep $loose={r < 3} />}
                                    {row.map(name => (
                                        <ToolItem key={name} $active={name === 'cursor'}>
                                            {name === 'swatch' ? <Swatch /> : ToolIcons[name]}
                                        </ToolItem>
                                    ))}
                                </React.Fragment>
                            ))}
                        </Tools>
                        <EdgeHandle><i /><u /><i /></EdgeHandle>
                    </Work>
                    <Status>
                        <SplitHandle><i /><u /><i /></SplitHandle>
                        <GreenDot $mr={8} />
                        20:00 03.06.2025 | O: 1.13745 | H: 1.13762 | L: 1.13675 | C: 1.13685 | V: 2420
                        <StatusRight>
                            <Muted $fs={16} $mr={18}>Current time:</Muted>
                            <Bright>UTC+1</Bright>
                            <CaretDown $ml={8} $mr={13} $w={4.500} $h={10} />
                            <Bright>09:38 05.06.2025</Bright>
                            <StatusSep $ml={8} />
                            <OnLabel>ON</OnLabel>
                            <Toggle />
                            <StatusSep $mr={15} />
                            <Muted>7 ms&nbsp;/&nbsp;7 ms</Muted>
                        </StatusRight>
                    </Status>
                </Main>
            </Shell>
        </>
    );
}
